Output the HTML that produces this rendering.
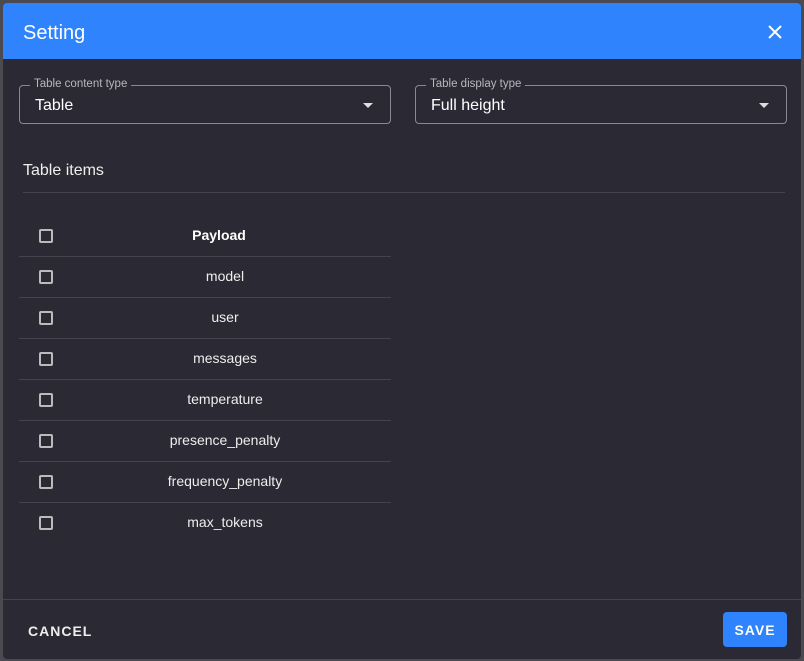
<!DOCTYPE html>
<html><head><style>
*{box-sizing:border-box;margin:0;padding:0}
body{width:804px;height:661px;background:#4a4a50;font-family:"Liberation Sans",sans-serif;position:relative;overflow:hidden}
.dlg{position:absolute;left:3px;top:3px;width:798px;height:656px;background:#2b2933;border-radius:4px;overflow:hidden}
.hdr{height:56px;background:#2f84fe;color:#fff;font-size:20px;padding:19px 0 0 20px}
.x{position:absolute;right:19px;top:22px}
.fld{position:absolute;top:82px;height:39px;border:1px solid #8a8890;border-radius:4px;width:372px}
.fld .lb{position:absolute;top:-8px;left:10px;background:#2b2933;padding:0 4px;font-size:11.5px;color:#b8b6bd}
.fld .v{position:absolute;left:15px;top:11px;color:#fff;font-size:16px}
.fld .ar{position:absolute;right:17px;top:17px;border-left:5px solid transparent;border-right:5px solid transparent;border-top:5px solid #ddd}
.ti{position:absolute;left:20px;top:159px;color:#eee;font-size:16px}
.hr{position:absolute;left:20px;right:16px;top:189px;height:1px;background:#45434b}
.row{position:absolute;left:16px;width:372px;height:41px;border-bottom:1px solid #45434b;color:#eee;font-size:14px}
.row .cb{position:absolute;left:20px;top:13px;width:14px;height:14px;border:2px solid #bbb;border-radius:2px}
.row .t{position:absolute;left:40px;right:0;top:11px;text-align:center}
.ft{position:absolute;left:0;right:0;top:596px;height:1px;background:#45434b}
.cancel{position:absolute;left:25px;top:620px;color:#eee;font-size:14px;font-weight:bold;letter-spacing:1px}
.save{position:absolute;left:720px;top:609px;width:64px;height:35px;background:#2f84fe;border-radius:4px;color:#fff;font-size:14px;font-weight:bold;letter-spacing:1px;text-align:center;line-height:37px}
</style></head><body>
<div class="dlg">
<div class="hdr">Setting</div>
<svg class="x" width="14" height="14" viewBox="0 0 14 14"><path d="M1 1L13 13M13 1L1 13" stroke="#fff" stroke-width="2"/></svg>
<div class="fld" style="left:16px"><span class="lb">Table content type</span><span class="v">Table</span><span class="ar"></span></div>
<div class="fld" style="left:412px"><span class="lb">Table display type</span><span class="v">Full height</span><span class="ar"></span></div>
<div class="ti">Table items</div>
<div class="hr"></div>
<div class="row" style="top:213px"><span class="cb"></span><span class="t" style="font-weight:bold;color:#fff;left:28px">Payload</span></div>
<div class="row" style="top:254px"><span class="cb"></span><span class="t">model</span></div>
<div class="row" style="top:295px"><span class="cb"></span><span class="t">user</span></div>
<div class="row" style="top:336px"><span class="cb"></span><span class="t">messages</span></div>
<div class="row" style="top:377px"><span class="cb"></span><span class="t">temperature</span></div>
<div class="row" style="top:418px"><span class="cb"></span><span class="t">presence_penalty</span></div>
<div class="row" style="top:459px"><span class="cb"></span><span class="t">frequency_penalty</span></div>
<div class="row" style="top:500px;border-bottom:none"><span class="cb"></span><span class="t">max_tokens</span></div>
<div class="ft"></div>
<div class="cancel">CANCEL</div>
<div class="save">SAVE</div>
</div>
</body></html>
